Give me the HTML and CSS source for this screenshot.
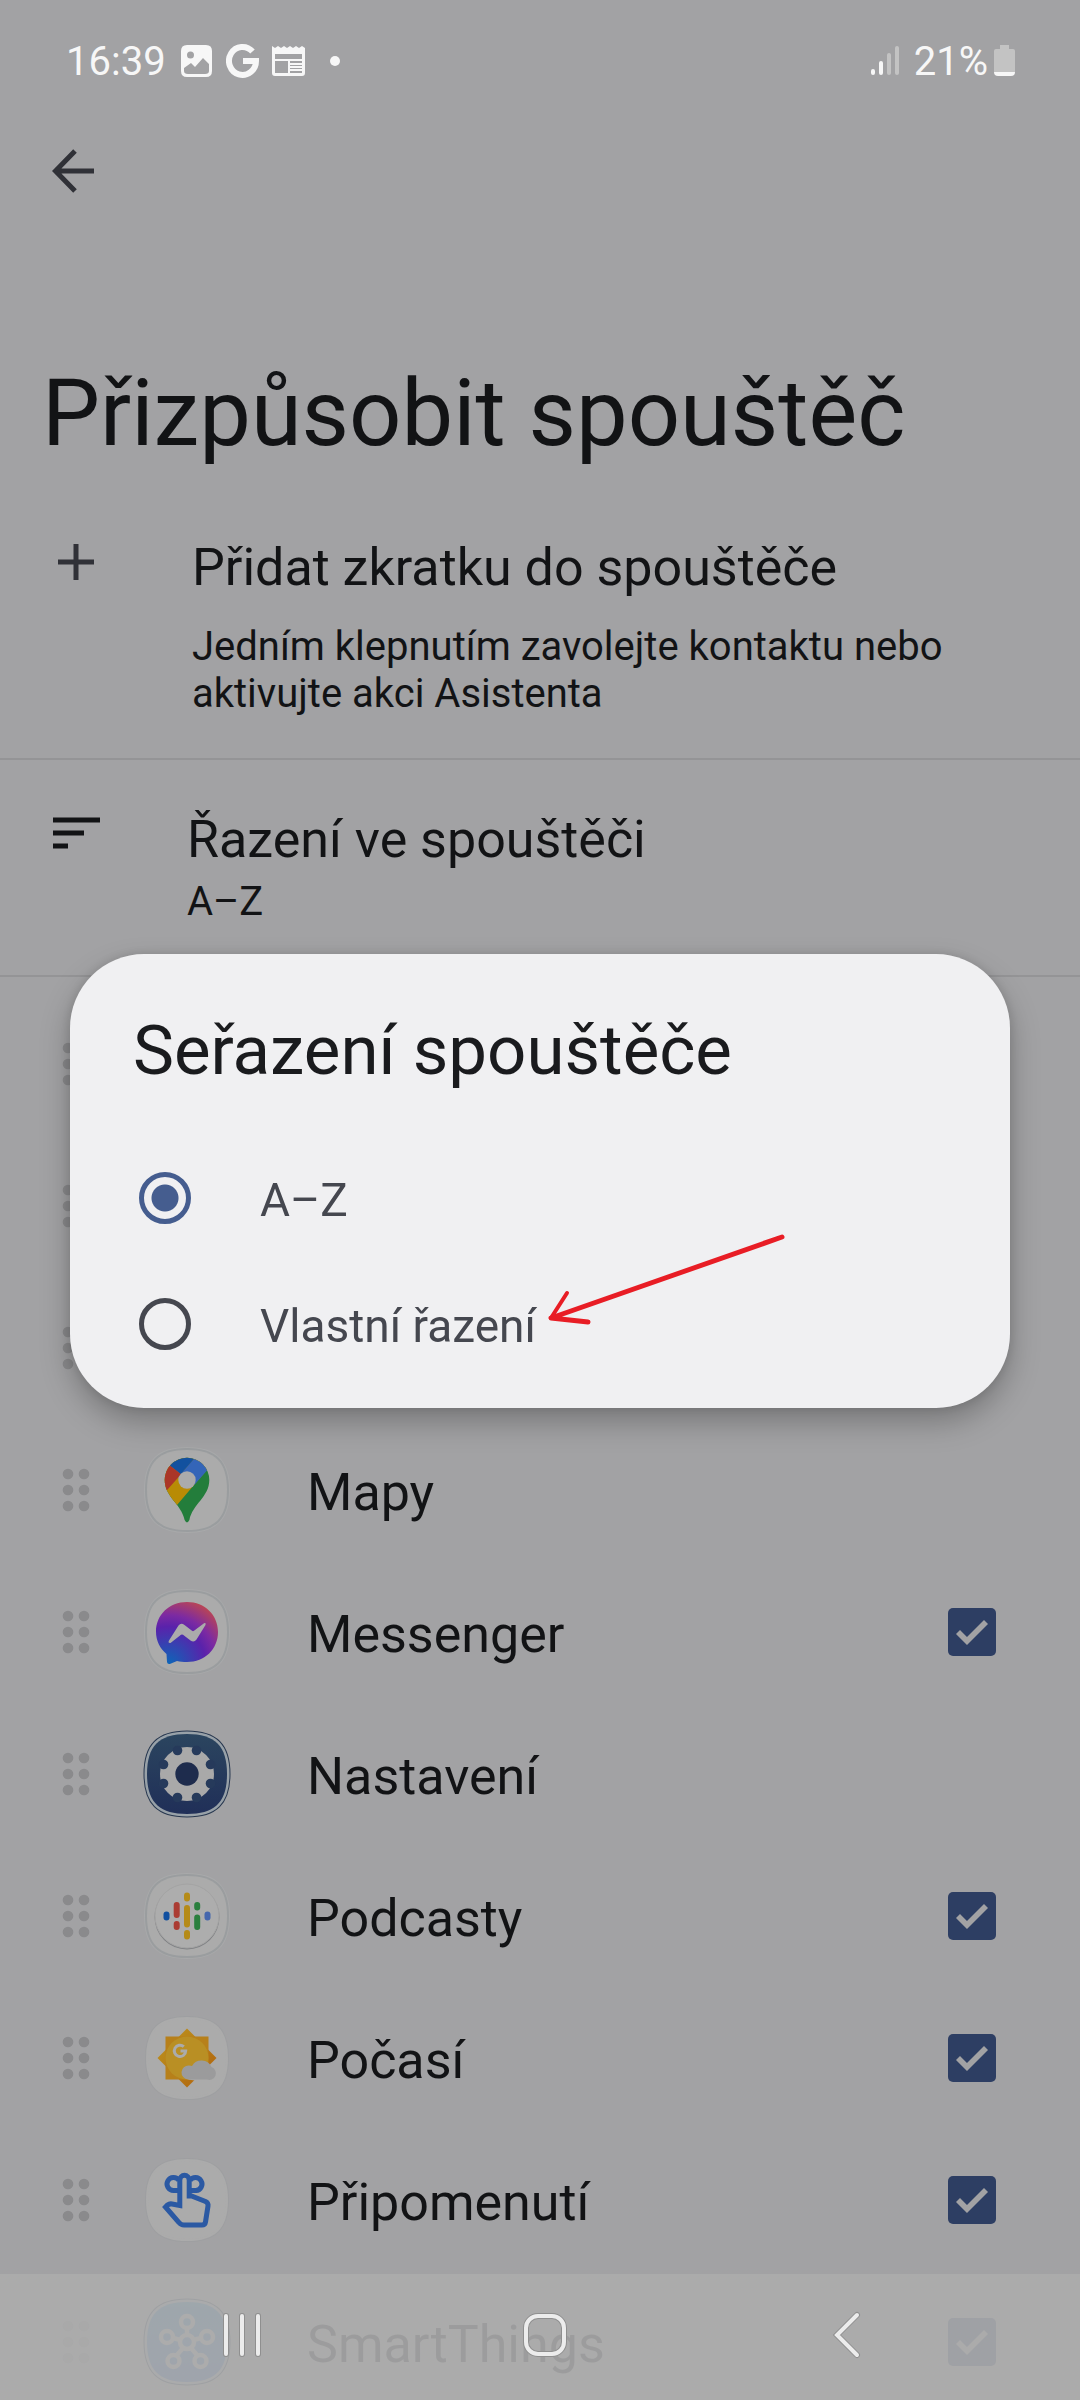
FILE: index.html
```html
<!DOCTYPE html>
<html lang="cs">
<head>
    <meta charset="UTF-8">
    <meta name="viewport" content="width=device-width, initial-scale=1.0">
    <title>Přizpůsobit spouštěč</title>
    <link rel="stylesheet" href="styles.css">
</head>
<body>
    <!-- shared shapes -->
    <svg class="defs" width="0" height="0" aria-hidden="true">
        <defs>
            <symbol id="handle" viewBox="0 0 28 44">
                <g fill="#8a8a8c">
                    <circle cx="6" cy="6" r="5.3"/><circle cx="22" cy="6" r="5.3"/>
                    <circle cx="6" cy="22" r="5.3"/><circle cx="22" cy="22" r="5.3"/>
                    <circle cx="6" cy="38" r="5.3"/><circle cx="22" cy="38" r="5.3"/>
                </g>
            </symbol>
            <path id="squircle" d="M5 45C5 17 17 5 45 5S85 17 85 45S73 85 45 85S5 73 5 45Z"/>
            <g id="plate">
                <use href="#squircle" fill="none" stroke="#a8a9aa" stroke-width="6"/>
                <use href="#squircle" fill="#ababab" stroke="#9a9d9f" stroke-width="4"/>
                <use href="#squircle" fill="#ababab"/>
            </g>
            <linearGradient id="navy" x1="0" y1="0" x2="0" y2="1">
                <stop offset="0" stop-color="#2b455f"/><stop offset="1" stop-color="#202f58"/>
            </linearGradient>
            <linearGradient id="sky" x1="0" y1="0" x2="0" y2="1">
                <stop offset="0" stop-color="#2678a8"/><stop offset="1" stop-color="#2c5ca8"/>
            </linearGradient>
            <radialGradient id="chat" cx="0.2" cy="1" r="1.1">
                <stop offset="0" stop-color="#0c66b8"/><stop offset="0.55" stop-color="#5a22ab"/>
                <stop offset="0.72" stop-color="#7c2aa2"/><stop offset="1" stop-color="#bb4652"/>
            </radialGradient>
            <linearGradient id="sun" x1="0" y1="0" x2="1" y2="1">
                <stop offset="0" stop-color="#bd961f"/><stop offset="1" stop-color="#b0600c"/>
            </linearGradient>
            <clipPath id="pin">
                <path d="M22.7 35A22.3 22.3 0 0 1 67.3 35C67.3 52 50.5 59 47.4 75Q45 79.8 42.6 75C39.5 59 22.7 52 22.7 35Z"/>
            </clipPath>
        </defs>
    </svg>

    <div class="status-bar">
        <span class="clock">16:39</span>
        <svg class="note" width="34" height="36" viewBox="0 0 34 36">
            <path fill="#f7f7f7" fill-rule="evenodd" d="M7 2H26Q32 2 32 8V28Q32 34 26 34H7Q1 34 1 28V8Q1 2 7 2ZM10.500 8.500A3.500 3.500 0 1 0 10.500 15.500A3.500 3.500 0 1 0 10.500 8.500ZM4 25V28Q4 31 8 31H25Q29 31 29 28V21L23 15L15 24L11 20Z"/>
        </svg>
        <svg class="note" width="34" height="36" viewBox="0 0 34 36">
            <path fill="none" stroke="#f7f7f7" stroke-width="6" d="M26.500 8.500A13.500 14 0 1 0 30 18H17"/>
        </svg>
        <svg class="note" width="34" height="36" viewBox="0 0 34 36">
            <path fill="#f7f7f7" fill-rule="evenodd" d="M0 3L3 5L6 3L9 5L12 3L15 5L18 3L21 5L24 3L27 5L30 3L33 5V30Q33 33 30 33H3Q0 33 0 30ZM3 11V16H30V11ZM3 18V30H16V18ZM18 18V20H30V18ZM18 22V23H30V22ZM18 25V26H30V25ZM18 28V30H30V28Z"/>
        </svg>
        <span class="more-dot"></span>
        <svg class="signal" width="30" height="32" viewBox="0 0 30 32">
            <g fill="none" stroke-linecap="round" stroke-width="4">
                <path stroke="#f7f7f7" d="M3 26V28M11 18V28"/>
                <path stroke="#c3c3c3" d="M19 10V28M27 3V28"/>
            </g>
        </svg>
        <span class="percent">21%</span>
        <svg width="21" height="32" viewBox="0 0 21 32">
            <path fill="#c3c3c3" d="M6 0H15V4H19Q21 4 21 6V27H0V6Q0 4 2 4H6Z"/>
            <path fill="#f7f7f7" d="M0 27H21Q21 31 17 31H4Q0 31 0 27Z"/>
        </svg>
    </div>

    <header>
        <button class="back" aria-label="Zpět">
            <svg width="44" height="44" viewBox="0 0 44 44">
                <path fill="none" stroke="#303137" stroke-width="5" d="M42 22H5M23 2L3.500 22L23 42"/>
            </svg>
        </button>
        <h1>Přizpůsobit spouštěč</h1>
    </header>

    <main>
        <section class="option add">
            <svg class="option-icon" width="48" height="48" viewBox="0 0 48 48">
                <path stroke="#303137" stroke-width="5" d="M24 6V42M6 24H42"/>
            </svg>
            <div>
                <h2>Přidat zkratku do spouštěče</h2>
                <p>Jedním klepnutím zavolejte kontaktu nebo aktivujte akci Asistenta</p>
            </div>
        </section>
        <section class="option sort">
            <svg class="option-icon" width="48" height="48" viewBox="0 0 48 48">
                <path stroke="#121315" stroke-width="5" d="M1 10H48M1 23H32M1 36H16"/>
            </svg>
            <div>
                <h2>Řazení ve spouštěči</h2>
                <p>A–Z</p>
            </div>
        </section>

        <ul class="apps">
            <!-- rows under the dialog -->
            <li><svg class="handle"><use href="#handle"/></svg></li>
            <li><svg class="handle"><use href="#handle"/></svg></li>
            <li><svg class="handle"><use href="#handle"/></svg></li>
            <li>
                <svg class="handle"><use href="#handle"/></svg>
                <svg class="app-icon" viewBox="0 0 90 90">
                    <use href="#plate"/>
                    <g clip-path="url(#pin)">
                        <rect width="90" height="90" fill="#237d3b"/>
                        <path fill="#b88b05" d="M70 19L35 60H0V0H90Z"/>
                        <path fill="#3465b8" d="M53.500 12L36 32L45 36L52.500 39.700L75 14L60 0Z"/>
                        <path fill="#12519f" d="M22 16L41 31L38 30L54.500 11L40 0Z"/>
                        <path fill="#ab3628" d="M22 16L40 30L37.500 31L24 46.300L10 40Z"/>
                    </g>
                    <circle cx="45" cy="35" r="8.700" fill="#ababab"/>
                </svg>
                <span class="name">Mapy</span>
            </li>
            <li>
                <svg class="handle"><use href="#handle"/></svg>
                <svg class="app-icon" viewBox="0 0 90 90">
                    <use href="#plate"/>
                    <path fill="url(#chat)" d="M45 15C27 15 14 28 14 44.500C14 54 18 61.500 24.500 67L25 75Q25.500 78 29 76.500L35 74C38 74.800 41 75 45 75C63 75 76 62 76 45C76 28 63 15 45 15Z"/>
                    <path fill="#ababab" d="M26.700 54L36.500 38.500Q39 35.500 42.500 38L50 43.800Q51 44.500 52 43.800L62 36.200Q64.500 35.500 63.500 38L54.500 52.500Q52 56 48.500 53.500L41 47.800Q40 47.200 39 47.800L28.500 56Q25.800 56.500 26.700 54Z"/>
                </svg>
                <label class="name" for="messenger">Messenger</label>
                <input type="checkbox" id="messenger" checked>
            </li>
            <li>
                <svg class="handle"><use href="#handle"/></svg>
                <svg class="app-icon" viewBox="0 0 90 90">
                    <use href="#squircle" fill="none" stroke="#27374f" stroke-width="7"/>
                    <use href="#squircle" fill="url(#navy)" stroke="#98a1a8" stroke-width="5"/>
                    <use href="#squircle" fill="url(#navy)"/>
                    <circle cx="45" cy="45" r="27" fill="#a9a9a9"/>
                    <g fill="#263a5b">
                        <circle cx="54.500" cy="21.500" r="4.800"/><circle cx="68.500" cy="35.500" r="4.800"/>
                        <circle cx="68.500" cy="54.500" r="4.800"/><circle cx="54.500" cy="68.500" r="4.800"/>
                        <circle cx="35.500" cy="68.500" r="4.800"/><circle cx="21.500" cy="54.500" r="4.800"/>
                        <circle cx="21.500" cy="35.500" r="4.800"/><circle cx="35.500" cy="21.500" r="4.800"/>
                    </g>
                    <circle cx="45" cy="45" r="11.700" fill="#1e2c4d"/>
                </svg>
                <span class="name">Nastavení</span>
            </li>
            <li>
                <svg class="handle"><use href="#handle"/></svg>
                <svg class="app-icon" viewBox="0 0 90 90">
                    <use href="#plate"/>
                    <circle cx="45" cy="46" r="32.500" fill="#7f8184"/>
                    <circle cx="45" cy="45" r="32" fill="#adadad" stroke="#a4a4a4" stroke-width="1"/>
                    <g fill="none" stroke-width="6" stroke-linecap="round">
                        <path stroke="#1150a0" d="M24.500 43.500V46.500"/>
                        <path stroke="#ab3c33" d="M34.700 34V44M34.700 53V56"/>
                        <path stroke="#b58b18" d="M45 24.500V27.500M45 37V53.500M45 62V65.500"/>
                        <path stroke="#2a7f3e" d="M55.200 34V36.500M55.200 46.500V56"/>
                        <path stroke="#4566ad" d="M65.500 43.500V46.500"/>
                    </g>
                </svg>
                <label class="name" for="podcasty">Podcasty</label>
                <input type="checkbox" id="podcasty" checked>
            </li>
            <li>
                <svg class="handle"><use href="#handle"/></svg>
                <svg class="app-icon" viewBox="0 0 90 90">
                    <use href="#squircle" fill="#ababab" stroke="#9e9fa1" stroke-width="4"/>
                    <use href="#squircle" fill="#ababab" stroke="#ababab" stroke-width="2"/>
                    <path fill="url(#sun)" d="M45 15.500L74.500 45L45 74.500L15.500 45Z"/>
                    <path fill="#b7801a" d="M23.500 23.500H66.500V66.500H23.500Z"/>
                    <circle cx="45" cy="45" r="21.500" fill="#b98f24"/>
                    <path fill="none" stroke="#ababab" stroke-width="3" d="M41.800 33.600A5.700 5.700 0 1 0 43.700 38H38.500"/>
                    <path fill="#ababab" d="M70 54V68H56L46 66.500Z"/>
                    <path fill="#9b9b9c" d="M46 66.500A7 7 0 0 1 47 52.500Q49 52.500 50 53A11 11 0 0 1 69.500 54A6.500 6.500 0 0 1 65 66.500Z"/>
                </svg>
                <label class="name" for="pocasi">Počasí</label>
                <input type="checkbox" id="pocasi" checked>
            </li>
            <li>
                <svg class="handle"><use href="#handle"/></svg>
                <svg class="app-icon" viewBox="0 0 90 90">
                    <use href="#squircle" fill="#ababab" stroke="#9e9fa1" stroke-width="4"/>
                    <use href="#squircle" fill="#ababab" stroke="#ababab" stroke-width="2"/>
                    <g fill="none" stroke="#2b59a3" stroke-width="5">
                        <path d="M37.800 35.500H31.500A6.500 6.500 0 1 1 37 25.500M47.200 35.500H54A6.500 6.500 0 1 0 48 25.500"/>
                        <path d="M37.800 50.500V25A4.700 4.700 0 0 1 47.200 25V41H49.500L63.500 46.500Q66.500 48 66 51L63.500 67Q63 70 60 70H42Q39 70 37 67.500L23.500 52L25.500 50Q27.500 48.500 30 49Z"/>
                    </g>
                </svg>
                <label class="name" for="pripomenuti">Připomenutí</label>
                <input type="checkbox" id="pripomenuti" checked>
            </li>
            <li>
                <svg class="handle"><use href="#handle"/></svg>
                <svg class="app-icon" viewBox="0 0 90 90">
                    <use href="#squircle" fill="none" stroke="#27374f" stroke-width="7"/>
                    <use href="#squircle" fill="url(#sky)" stroke="#98a1a8" stroke-width="5"/>
                    <use href="#squircle" fill="url(#sky)"/>
                    <g fill="none" stroke="#ababab" stroke-width="4.500">
                        <path d="M45 38V32M38.500 43L31 41M51.500 43L59 41M41 51L35 58M49 51L55 58"/>
                        <circle cx="45" cy="45" r="7"/><circle cx="45" cy="25" r="6"/>
                        <circle cx="25" cy="40" r="6"/><circle cx="65" cy="40" r="6"/>
                        <circle cx="31.500" cy="64" r="6"/><circle cx="58.500" cy="64" r="6"/>
                    </g>
                </svg>
                <label class="name" for="smartthings">SmartThings</label>
                <input type="checkbox" id="smartthings" checked>
            </li>
        </ul>
    </main>

    <div class="overlay">
        <div class="dialog" role="dialog" aria-labelledby="dialog-title">
            <h2 id="dialog-title">Seřazení spouštěče</h2>
            <div class="choice">
                <input type="radio" name="order" id="order-az" checked>
                <label for="order-az">A–Z</label>
            </div>
            <div class="choice">
                <input type="radio" name="order" id="order-own">
                <label for="order-own">Vlastní řazení</label>
                <!-- red pen arrow -->
                <svg class="pen" width="240" height="94" viewBox="0 0 240 94">
                    <g fill="none" stroke="#e81d25" stroke-linecap="round" stroke-linejoin="round">
                        <path stroke-width="5" d="M235 4L4 85L41 89"/>
                        <path stroke-width="4" d="M4 85L20 60"/>
                    </g>
                </svg>
            </div>
        </div>
    </div>

    <nav class="nav-bar">
        <button aria-label="Poslední aplikace">
            <svg width="48" height="48" viewBox="0 0 48 48">
                <path stroke="#8f8f8f" stroke-width="6" stroke-linecap="round" d="M8 5V43M24 5V43M40 5V43"/>
                <path stroke="#ececec" stroke-width="4" stroke-linecap="round" d="M8 5V43M24 5V43M40 5V43"/>
            </svg>
        </button>
        <button aria-label="Domů">
            <svg width="48" height="48" viewBox="0 0 48 48">
                <rect x="5" y="5" width="38" height="38" rx="12" fill="none" stroke="#8f8f8f" stroke-width="6"/>
                <rect x="5" y="5" width="38" height="38" rx="12" fill="none" stroke="#ececec" stroke-width="4"/>
            </svg>
        </button>
        <button aria-label="Zpět">
            <svg width="48" height="48" viewBox="0 0 48 48">
                <path fill="none" stroke="#8f8f8f" stroke-width="6" stroke-linecap="round" d="M34 4L14 24L34 44"/>
                <path fill="none" stroke="#ececec" stroke-width="4" stroke-linecap="round" d="M34 4L14 24L34 44"/>
            </svg>
        </button>
    </nav>
</body>
</html>
```
FILE: styles.css
```css
*{
    box-sizing: border-box;
}
body{
    margin: 0;
    height: 100vh;
    overflow: hidden;
    background-color: #a2a2a4;
    color: #121315;
    font-family: Roboto, "Noto Sans", sans-serif;
}
h1,h2,p,ul{
    margin: 0;
    padding: 0;
    font-weight: 400;
}
button{
    padding: 0;
    border: 0;
    background: none;
}
svg{
    display: block;
    flex: none;
}
.defs{
    position: absolute;
}

/* status bar */
.status-bar{
    display: flex;
    align-items: center;
    height: 122px;
    padding: 0 65px 0 66px;
    color: #f7f7f7;
    font-size: 40px;
}
.clock{
    margin-right: 2px;
}
.note{
    margin-left: 12px;
}
.more-dot{
    width: 10px;
    height: 10px;
    margin-left: 24px;
    border-radius: 50%;
    background-color: #f7f7f7;
}
.signal{
    margin-left: auto;
}
.percent{
    margin: 0 6px 0 14px;
}

/* header */
.back{
    display: block;
    margin: 27px 0 0 52px;
}
h1{
    margin-top: 167px;
    padding: 0 42px;
    font-size: 92px;
    line-height: 108px;
}

/* options above the list */
.option{
    display: flex;
    border-bottom: 2px solid #949496;
}
.option h2{
    font-size: 52px;
    line-height: 60px;
}
.option p{
    font-size: 40px;
    line-height: 47px;
}
.option-icon{
    margin-left: 52px;
    margin-right: 87px;
}
.add{
    padding: 70px 88px 41px 0;
}
.add .option-icon{
    margin-right: 92px;
}
.add p{
    margin-top: 25px;
}
.sort{
    padding: 50px 88px 50px 0;
}
.sort p{
    margin-top: 8px;
}

/* apps */
.apps{
    padding-top: 16px;
    list-style: none;
}
.apps li{
    display: flex;
    align-items: center;
    height: 142px;
    padding: 0 84px 0 62px;
}
.handle{
    width: 28px;
    height: 44px;
}
.app-icon{
    width: 90px;
    height: 90px;
    margin-left: 52px;
    overflow: visible;
}
.name{
    flex: 1;
    margin-left: 75px;
    padding-top: 6px;
    font-size: 52px;
    line-height: 60px;
}
input{
    appearance: none;
    flex: none;
    margin: 0;
}
.apps input{
    width: 48px;
    height: 48px;
    border-radius: 5px;
    background-color: #2d3e63;
}
.apps input:checked::after{
    content: "";
    display: block;
    height: 48px;
    background-color: #a2a2a4;
    clip-path: polygon(8px 26px, 12px 22px, 19px 29px, 36px 12px, 40px 16px, 19px 37px);
}

/* dialog */
.overlay{
    position: fixed;
    top: 88px;
    right: 0;
    bottom: 126px;
    left: 0;
    display: flex;
    align-items: center;
    padding: 0 70px;
}
.dialog{
    flex: 1;
    padding: 57px 63px 21px;
    border-radius: 74px;
    background-color: #f0f0f2;
    box-shadow: 0 14px 30px rgba(0, 0, 0, 0.26), 0 0 12px rgba(0, 0, 0, 0.12);
}
.dialog h2{
    margin-bottom: 44px;
    color: #1a1b1e;
    font-size: 69px;
    line-height: 80px;
}
.choice{
    position: relative;
    display: flex;
    align-items: center;
    height: 126px;
    color: #45474f;
    font-size: 46px;
}
.choice input{
    width: 52px;
    height: 52px;
    margin: 0 69px 0 6px;
    border: 5px solid #45474f;
    border-radius: 50%;
}
.choice input:checked{
    border-color: #455d8f;
    background: radial-gradient(circle, #455d8f 13px, transparent 14px);
}
.choice label{
    padding-top: 4px;
}
.pen{
    position: absolute;
    top: -28px;
    left: 414px;
}

/* navigation bar */
.nav-bar{
    position: fixed;
    right: 0;
    bottom: 0;
    left: 0;
    display: flex;
    justify-content: space-between;
    align-items: center;
    height: 126px;
    padding: 0 209px 4px 218px;
    background-color: rgba(172, 172, 172, 0.9);
}
```
